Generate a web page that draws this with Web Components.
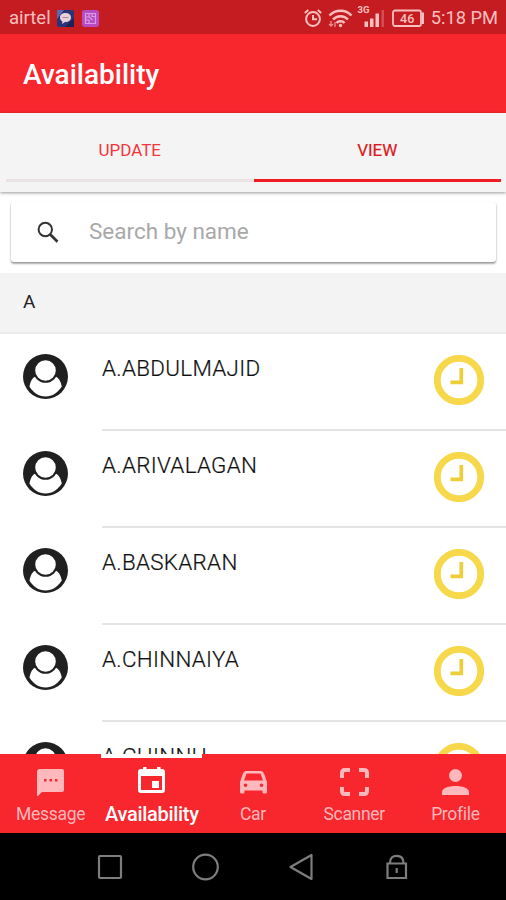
<!DOCTYPE html>
<html lang="en">
<head>
<meta charset="utf-8">
<meta name="viewport" content="width=device-width, initial-scale=1">
<title>Availability</title>
<style>
    html, body {
        margin: 0;
        height: 100%;
    }
    body {
        overflow: hidden;
        background: #fff;
        font-family: Roboto, sans-serif;
    }
</style>
</head>
<body>
<availability-app></availability-app>

<script>
class StatusBar extends HTMLElement {
    constructor() {
        super();
        this.attachShadow({ mode: 'open' });
    }

    connectedCallback() {
        this.shadowRoot.innerHTML = `
            <style>
                :host {
                    display: flex;
                    align-items: center;
                    height: 34px;
                    padding: 2px 8px 0 9px;
                    box-sizing: border-box;
                    background: #c41c21;
                    color: #fac0c0;
                    font-size: 18.5px;
                    line-height: 32px;
                }
                svg { display: block; flex: none; }
                .carrier { width: 48px; }
                .time { font-size: 18.3px; white-space: nowrap; }
                .spacer { flex: 1; }
            </style>
            <span class="carrier">airtel</span>
            <svg width="17" height="17" viewBox="0 0 17 17">
                <rect width="17" height="17" rx="2" fill="#283378"/>
                <path d="M0 0h7L0 9z" fill="#566eae"/>
                <path d="M17 8v9H8z" fill="#1b2055"/>
                <path d="M8.500 3C5 3 3 5 3 7.500c0 2 1 3.200 2.400 4L5 14l3-2c4 0 6-1.800 6-4.500S12 3 8.500 3z" fill="#ead1d7"/>
                <path d="M5.500 7.500h6" stroke="#a38ba0" stroke-width="1"/>
            </svg>
            <svg width="17" height="17" viewBox="0 0 17 17" style="margin-left:8px">
                <rect width="17" height="17" rx="3" fill="#b64bc4"/>
                <path d="M3.500 3.500h10v10h-10zM3.500 7h4l3 3M7 3.500v3M10 3.500v3h3M7 13v-3H4" fill="none" stroke="#db9be2" stroke-width="1.200"/>
            </svg>
            <span class="spacer"></span>
            <svg width="18" height="19" viewBox="0 0 18 19" fill="none" stroke="#fac0c0" stroke-width="2">
                <circle cx="9" cy="10" r="6.900"/>
                <path d="M9 6v4.300h4M.8 4l3.500-3M17.200 4l-3.500-3"/>
            </svg>
            <svg width="25" height="20" viewBox="0 0 25 20" style="margin-left:6px" fill="none" stroke="#fac0c0" stroke-width="2.500">
                <path d="M1.500 7.500c6-6.500 16-6.500 22 0M5 11.500c4-4.500 11-4.500 15 0M8.500 15c2-2.500 6-2.500 8 0"/>
                <circle cx="12.500" cy="17.500" r="1.700" fill="#fac0c0" stroke="none"/>
                <path d="M3 13v5M1 16l2 2 2-2M7 19v-5" stroke-width="1.300" opacity=".7"/>
            </svg>
            <svg width="29" height="24" viewBox="0 0 29 24" style="margin:-4px 0 0 4px" fill="#fac0c0">
                <text x="0.500" y="9" font-family="Roboto, sans-serif" font-size="9.500" font-weight="700">3G</text>
                <path d="M7.500 17.500H11V23H7.500zM13 14.500h3.500V23H13zM18.500 9.500H22V23h-3.500z"/>
                <path d="M24.500 6H27v17h-2.500z" opacity=".3"/>
            </svg>
            <svg width="33" height="19" viewBox="0 0 33 19" style="margin-left:6px">
                <rect x="1" y="1.500" width="28" height="15.500" rx="2" fill="none" stroke="#fac0c0" stroke-width="1.800"/>
                <path d="M30 3.500h2v11.500h-2z" fill="#fac0c0"/>
                <text x="15.200" y="13.800" text-anchor="middle" fill="#fac0c0" font-family="Roboto, sans-serif" font-size="12.500" font-weight="500">46</text>
            </svg>
            <span class="time" style="margin-left:6px">5:18 PM</span>
        `;
    }
}

class AppHeader extends HTMLElement {
    constructor() {
        super();
        this.attachShadow({ mode: 'open' });
    }

    connectedCallback() {
        this.shadowRoot.innerHTML = `
            <style>
                :host {
                    display: flex;
                    align-items: center;
                    height: 79px;
                    padding: 1px 23px 0;
                    box-sizing: border-box;
                    background: #f8262d;
                    color: #fff;
                    font-size: 28px;
                    font-weight: 500;
                }
            </style>
            <slot></slot>
        `;
    }
}

class SegmentTabs extends HTMLElement {
    constructor() {
        super();
        this.attachShadow({ mode: 'open' });
    }

    connectedCallback() {
        this.shadowRoot.innerHTML = `
            <style>
                :host {
                    display: flex;
                    position: relative;
                    height: 79px;
                    padding: 8px 5px 10px 6px;
                    box-sizing: border-box;
                    background: #f4f4f4;
                    box-shadow: 0 1px 3px rgba(0, 0, 0, 0.4);
                }
            </style>
            <slot></slot>
        `;
    }
}

class SegmentTab extends HTMLElement {
    constructor() {
        super();
        this.attachShadow({ mode: 'open' });
    }

    connectedCallback() {
        this.shadowRoot.innerHTML = `
            <style>
                :host {
                    display: flex;
                    flex: 1;
                    align-items: center;
                    justify-content: center;
                    box-sizing: border-box;
                    border-bottom: 3px solid #e9e3e3;
                    color: #f4353b;
                    font-size: 17px;
                }
                :host([active]) {
                    border-bottom-color: #ec1c22;
                    color: #dc1a20;
                    -webkit-text-stroke: 0.2px #dc1a20;
                }
            </style>
            <slot></slot>
        `;
    }
}

class SearchBox extends HTMLElement {
    constructor() {
        super();
        this.attachShadow({ mode: 'open' });
    }

    connectedCallback() {
        this.shadowRoot.innerHTML = `
            <style>
                :host {
                    display: block;
                    height: 81px;
                    padding: 10px 10px 10px 11px;
                    box-sizing: border-box;
                    background: #fff;
                }
                .box {
                    display: flex;
                    align-items: center;
                    gap: 30px;
                    height: 60px;
                    padding-left: 26px;
                    border-radius: 3px;
                    background: #fff;
                    box-shadow: 0 2px 2px rgba(0, 0, 0, 0.25), 0 1px 2px rgba(0, 0, 0, 0.25);
                    color: #a8a8a8;
                    font-size: 22.5px;
                }
                svg { display: block; }
                span { margin-top: -2px; }
            </style>
            <div class="box">
                <svg width="22" height="22" viewBox="0 0 22 22" fill="none" stroke="#333">
                    <circle cx="8.300" cy="8.500" r="6.700" stroke-width="2"/>
                    <path d="M13.300 13.500l7.200 7.200" stroke-width="2.700"/>
                </svg>
                <span><slot></slot></span>
            </div>
        `;
    }
}

class ListHeading extends HTMLElement {
    constructor() {
        super();
        this.attachShadow({ mode: 'open' });
    }

    connectedCallback() {
        this.shadowRoot.innerHTML = `
            <style>
                :host {
                    display: flex;
                    align-items: center;
                    height: 61px;
                    padding: 0 23px 3px;
                    box-sizing: border-box;
                    border-bottom: 2px solid #ebebeb;
                    background: #f3f3f3;
                    color: #222;
                    font-size: 19px;
                }
            </style>
            <slot></slot>
        `;
    }
}

class PersonRow extends HTMLElement {
    constructor() {
        super();
        this.attachShadow({ mode: 'open' });
    }

    connectedCallback() {
        this.shadowRoot.innerHTML = `
            <style>
                :host {
                    display: flex;
                    height: 97px;
                    padding-left: 23px;
                    box-sizing: border-box;
                }
                svg { display: block; flex: none; }
                .avatar { margin: 20px 34px 0 0; }
                .body {
                    display: flex;
                    flex: 1;
                    justify-content: space-between;
                    padding: 21px 22px 0 0;
                    border-bottom: 2px solid #e4e4e4;
                }
                .name {
                    color: #111;
                    font-size: 22.4px;
                    font-weight: 300;
                    letter-spacing: 0.3px;
                    line-height: 26px;
                    white-space: nowrap;
                    -webkit-text-stroke: 0.2px #111;
                }
            </style>
            <svg class="avatar" width="45" height="45" viewBox="0 0 45 45">
                <circle cx="22.500" cy="22.500" r="22.500" fill="#202020"/>
                <path d="M6.500 32.500C7.500 27 9.500 23.500 12.500 22.500h20c3 1 5.200 4.500 6.200 10C35 38.500 29.500 42.500 22.500 42.500S10 38.500 6.500 32.500z" fill="#fff"/>
                <circle cx="22.500" cy="16.500" r="11.300" fill="#fff" stroke="#202020" stroke-width="2"/>
            </svg>
            <div class="body">
                <span class="name"><slot></slot></span>
                <svg width="50" height="50" viewBox="0 0 50 50" fill="none">
                    <circle cx="25" cy="25" r="21.700" stroke="#f6d84a" stroke-width="6.800"/>
                    <path d="M27.300 13v14.300H16.500" stroke="#edce39" stroke-width="3.700"/>
                </svg>
            </div>
        `;
    }
}

const tabIcons = {
    message: '<path fill-rule="evenodd" d="M3 0h22q2 0 2 2v19q0 2-2 2H5l-4 4H0V3q0-3 3-3zM7 10v2.500h2.500V10zm5.500 0v2.500H15V10zm5.500 0v2.500h2.500V10z"/>',
    calendar: '<path fill-rule="evenodd" d="M5-2h3.500v2H19v-2h3.500v2H24q3 0 3 3v18q0 3-3 3H3q-3 0-3-3V3q0-3 3-3h2zM3 7v14h21V7zm11 5h7v7h-7z"/>',
    car: '<path fill-rule="evenodd" d="M6 2h15q2 0 3 2.500l3 8.500v10q0 1.500-1.500 1.500H24q-1.500 0-1.500-1.500v-1.500h-18V23q0 1.500-1.500 1.500H1.500Q0 24.500 0 23V13l3-8.500Q4 2 6 2zm.5 2.500L4 11.500h19l-2.500-7zM5.500 14.500a1.800 1.800 0 100 3.600 1.800 1.800 0 000-3.600zm16 0a1.800 1.800 0 100 3.600 1.800 1.800 0 000-3.600z"/>',
    scan: '<path d="M1 9V4q0-3 3-3h5M18 1h5q3 0 3 3v5M26 18v4q0 3-3 3h-5M9 25H4q-3 0-3-3v-4" fill="none" stroke="currentColor" stroke-width="4"/>',
    person: '<circle cx="13.500" cy="6.500" r="6.500"/><path d="M0 26v-3c0-8 27-8 27 0v3z"/>'
};

class BottomTab extends HTMLElement {
    constructor() {
        super();
        this.attachShadow({ mode: 'open' });
    }

    connectedCallback() {
        this.shadowRoot.innerHTML = `
            <style>
                :host {
                    display: flex;
                    flex: 1 1 0;
                    min-width: 0;
                    flex-direction: column;
                    align-items: center;
                    gap: 8px;
                    padding: 15px 0 0;
                    box-sizing: border-box;
                    color: #ffb8bb;
                    font-size: 17.5px;
                    letter-spacing: -0.3px;
                    line-height: 23px;
                    white-space: nowrap;
                }
                :host([active]) {
                    border-top: 4px solid #fff;
                    padding-top: 11px;
                    color: #fff;
                    font-size: 20px;
                    font-weight: 500;
                }
                svg { display: block; overflow: visible; }
            </style>
            <svg width="27" height="26" viewBox="0 0 27 26" fill="currentColor">${tabIcons[this.getAttribute('icon')]}</svg>
            <span><slot></slot></span>
        `;
    }
}

class BottomTabs extends HTMLElement {
    constructor() {
        super();
        this.attachShadow({ mode: 'open' });
    }

    connectedCallback() {
        this.shadowRoot.innerHTML = `
            <style>
                :host {
                    display: flex;
                    height: 79px;
                    background: #f8262d;
                }
            </style>
            <slot></slot>
        `;
    }
}

class SystemNav extends HTMLElement {
    constructor() {
        super();
        this.attachShadow({ mode: 'open' });
    }

    connectedCallback() {
        this.shadowRoot.innerHTML = `
            <style>
                :host {
                    display: flex;
                    align-items: center;
                    justify-content: center;
                    gap: 68px;
                    height: 67px;
                    background: #000;
                }
                svg { display: block; }
            </style>
            <svg width="28" height="28" viewBox="0 0 28 28" fill="none" stroke="#7d7d7d" stroke-width="2.200"><rect x="4" y="3" width="22" height="22" rx="1"/></svg>
            <svg width="28" height="28" viewBox="0 0 28 28" fill="none" stroke="#7d7d7d" stroke-width="2.200"><circle cx="14.500" cy="14" r="12.300"/></svg>
            <svg width="28" height="28" viewBox="0 0 28 28" fill="none" stroke="#7d7d7d" stroke-width="2.200" stroke-linejoin="round"><path d="M24.500 2v24L3.500 14z"/></svg>
            <svg width="28" height="28" viewBox="0 0 28 28" fill="none" stroke="#7d7d7d" stroke-width="2.200"><path d="M4.500 10.500h18.500V25H4.500zM7 10C7 5 9.500 2.800 13.700 2.800S20.500 5 20.500 10M13.700 15v5"/></svg>
        `;
    }
}

class AvailabilityApp extends HTMLElement {
    constructor() {
        super();
        this.attachShadow({ mode: 'open' });
    }

    connectedCallback() {
        const people = ['A.ABDULMAJID', 'A.ARIVALAGAN', 'A.BASKARAN', 'A.CHINNAIYA', 'A.CHINNU'];

        this.shadowRoot.innerHTML = `
            <style>
                :host {
                    display: flex;
                    flex-direction: column;
                    width: 506px;
                    height: 900px;
                    overflow: hidden;
                }
                .list {
                    flex: 1;
                    min-height: 0;
                    overflow: hidden;
                }
            </style>
            <status-bar></status-bar>
            <app-header>Availability</app-header>
            <segment-tabs>
                <segment-tab>UPDATE</segment-tab>
                <segment-tab active>VIEW</segment-tab>
            </segment-tabs>
            <search-box>Search by name</search-box>
            <list-heading>A</list-heading>
            <div class="list">
                ${people.map(name => `<person-row>${name}</person-row>`).join('')}
            </div>
            <bottom-tabs>
                <bottom-tab icon="message">Message</bottom-tab>
                <bottom-tab icon="calendar" active>Availability</bottom-tab>
                <bottom-tab icon="car">Car</bottom-tab>
                <bottom-tab icon="scan">Scanner</bottom-tab>
                <bottom-tab icon="person">Profile</bottom-tab>
            </bottom-tabs>
            <system-nav></system-nav>
        `;
    }
}

customElements.define('status-bar', StatusBar);
customElements.define('app-header', AppHeader);
customElements.define('segment-tabs', SegmentTabs);
customElements.define('segment-tab', SegmentTab);
customElements.define('search-box', SearchBox);
customElements.define('list-heading', ListHeading);
customElements.define('person-row', PersonRow);
customElements.define('bottom-tab', BottomTab);
customElements.define('bottom-tabs', BottomTabs);
customElements.define('system-nav', SystemNav);
customElements.define('availability-app', AvailabilityApp);
</script>
</body>
</html>
